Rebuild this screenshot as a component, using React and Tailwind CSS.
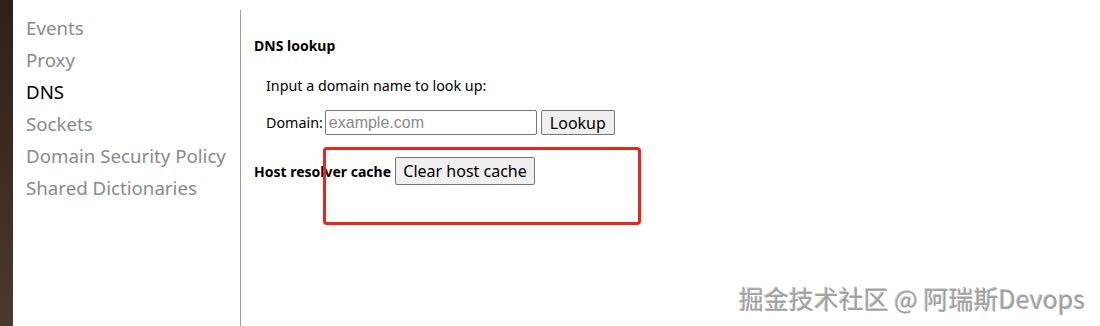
const navItems = [
  { label: "Events" },
  { label: "Proxy" },
  { label: "DNS", active: true },
  { label: "Sockets" },
  { label: "Domain Security Policy" },
  { label: "Shared Dictionaries" },
]

const uiFont = "font-['Noto_Sans','Open_Sans',sans-serif]"

function Sidebar() {
  return (
    <nav className={`w-[227px] shrink-0 pl-[13px] pt-[12px] ${uiFont}`}>
      {navItems.map((item) => (
        <div
          key={item.label}
          className={`h-[32px] text-[18.7px] leading-[32px] ${item.active ? "text-black" : "text-[#8a8a8a]"}`}
        >
          {item.label}
        </div>
      ))}
    </nav>
  )
}

function DnsPanel() {
  return (
    <div className={`relative flex-1 pl-[13px] pt-[36px] text-black ${uiFont}`}>
      <h2 className="text-[14px] font-bold leading-[20px]">DNS lookup</h2>

      <div className="pl-[12px]">
        <p className="mt-[20px] text-[14.3px] leading-[20px]">Input a domain name to look up:</p>

        <div className="mt-[14px] flex items-center gap-[2px] text-[14.3px]">
          <span>Domain:</span>
          <input
            type="text"
            placeholder="example.com"
            className="h-[25px] w-[212px] border border-[#767676] rounded-[2px] px-[3px] font-['Liberation_Sans',Arial,sans-serif] text-[16px] placeholder:text-[#8a8a8a] outline-none"
          />
          <button
            type="button"
            className="ml-[2px] h-[25px] w-[74px] rounded-[2px] border border-[#767676] bg-[#efefef] text-[16px] leading-none"
          >
            Lookup
          </button>
        </div>
      </div>

      <div className="mt-[22px] flex items-center gap-[4px]">
        <h2 className="text-[14px] font-bold">Host resolver cache</h2>
        <button
          type="button"
          className="h-[28px] w-[140px] rounded-[2px] border border-[#767676] bg-[#efefef] text-[16px] leading-none"
        >
          Clear host cache
        </button>
      </div>

      <div className="absolute left-[82px] top-[147px] h-[78px] w-[318px] rounded-[4px] border-[3px] border-[#e8261c]" />

      <div className="absolute right-[15px] top-[282px] font-['Noto_Sans_CJK_SC','Noto_Sans',sans-serif] text-[25px] leading-[32px] text-[#a0a0a0] [text-shadow:1px_1px_0_#ffffff,-1px_-1px_0_#cfcfcf]">
        掘金技术社区 @ 阿瑞斯Devops
      </div>
    </div>
  )
}

export default function App() {
  return (
    <div className="flex h-[326px] w-[1100px] overflow-hidden bg-white">
      <div className="w-[13px] shrink-0 bg-gradient-to-b from-[#2e2118] via-[#3d2c20] to-[#4a3a2e]" />
      <Sidebar />
      <div className="mt-[10px] w-px shrink-0 bg-[#a0a0a0]" />
      <DnsPanel />
    </div>
  )
}
